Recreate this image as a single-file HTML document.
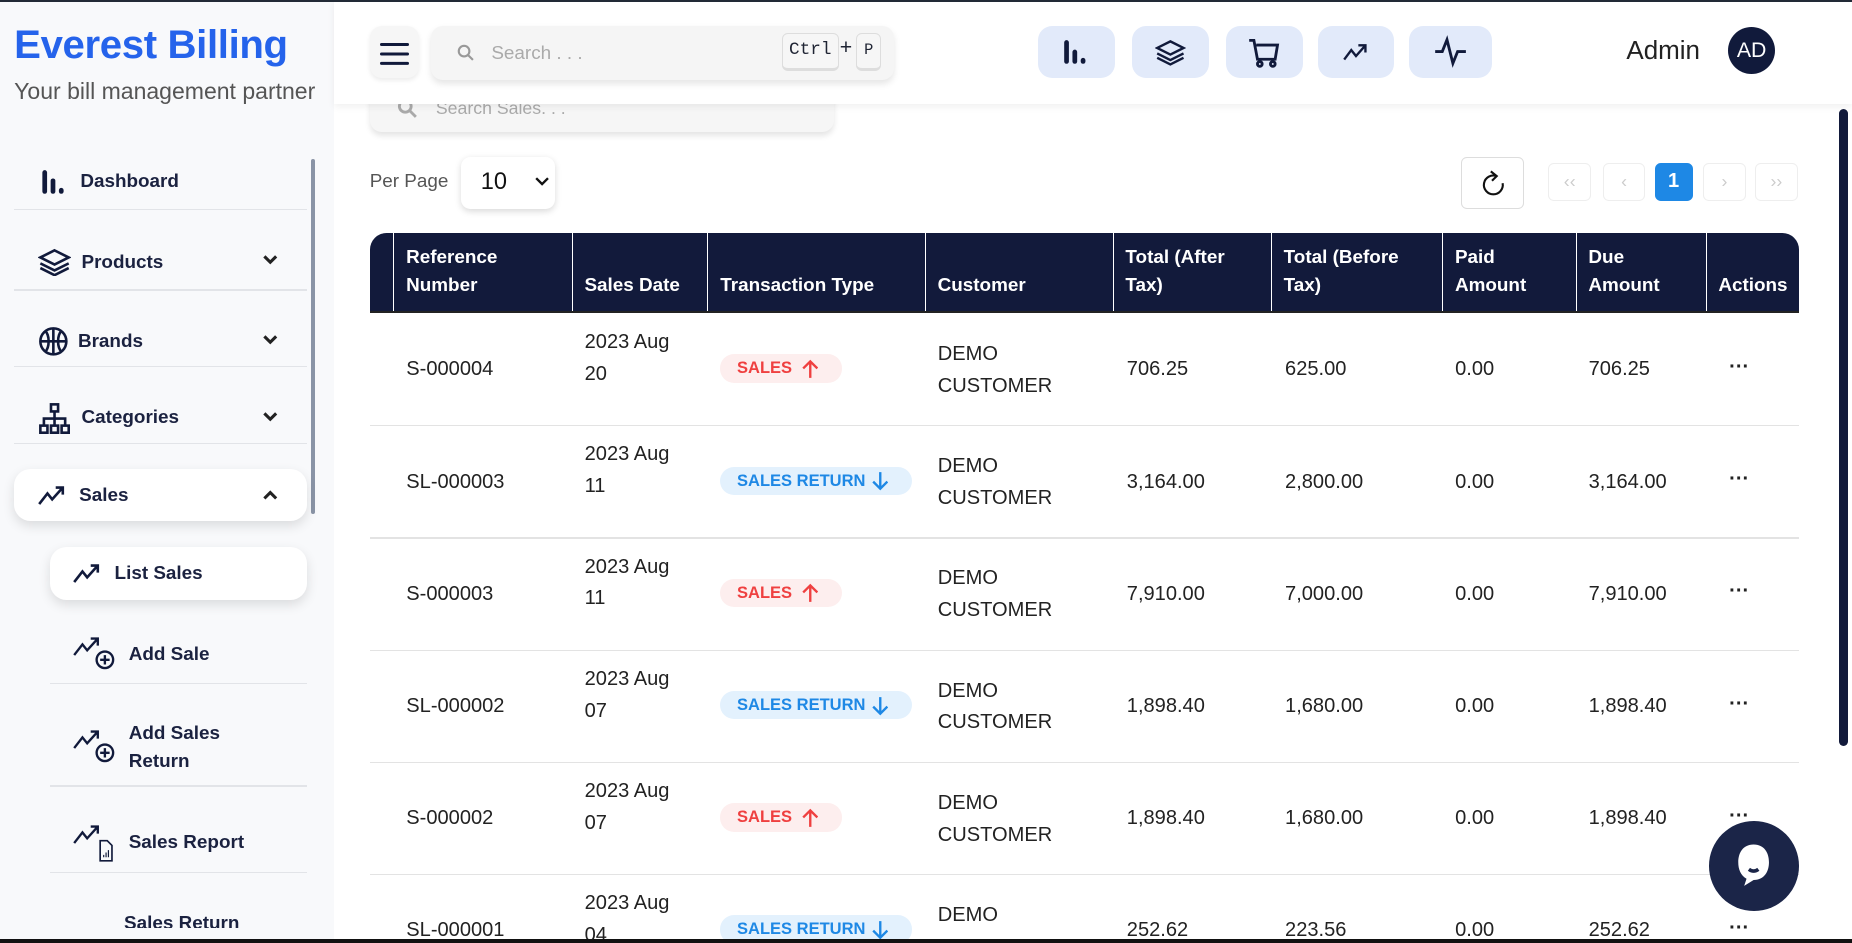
<!DOCTYPE html>
<html><head><meta charset="utf-8"><style>
*{box-sizing:border-box;margin:0;padding:0}
html,body{width:1852px;height:943px;overflow:hidden;background:#fff}
#r{zoom:1.18112;position:relative;width:1568px;height:798px;overflow:hidden;font-family:"Liberation Sans",sans-serif;color:#1f2433}
.a{position:absolute}
.side{left:0;top:0;width:283px;height:798px;background:#f8f9fb}
.brand{left:12px;top:19px;font-size:34px;font-weight:bold;color:#2563eb;letter-spacing:-0.3px}
.sub{left:12px;top:66px;font-size:19.5px;color:#555}
.item{left:12px;width:248px;font-size:16px;font-weight:bold;color:#1b2240;}
.sep{height:1px;background:#e2e4e8}
.ico{position:absolute}
.chev{position:absolute;right:24px}
.card{background:#fff;border-radius:14px;box-shadow:0 4px 10px rgba(0,0,0,.12)}
.hdr{left:283px;top:0;width:1285px;height:88px;background:#fff;box-shadow:0 3px 6px rgba(0,0,0,.06)}
.ib{top:22px;height:44px;background:#e2eafa;border-radius:12px}
.th{position:absolute;top:0;height:68px;color:#fff;font-weight:bold;font-size:16px;padding:10px 10px 0 10px;line-height:23px;border-left:1px solid #fff}
.td{position:absolute;font-size:17px;color:#222;line-height:27px}
.rowsep{position:absolute;left:313px;width:1210px;height:1px;background:#e3e3e3}
.b{position:absolute;height:24px;border-radius:12px;font-size:14px;font-weight:bold;line-height:24px;padding-left:14px}
.b svg{position:absolute;top:4px}
.bs{background:#fdeeee;color:#ef4040;width:103px}
.br{background:#e3f1fd;color:#1e88e5;width:162px}
.pg{position:absolute;top:138px;width:36px;height:32px;border:1px solid #eee;border-radius:5px;color:#ccc;text-align:center;line-height:30px;font-size:15px}
</style></head><body><div id="r">
<div class="a" style="left:0;top:0;width:1568px;height:2px;background:#222a36;z-index:9"></div>
<div class="a side"></div>
<div class="a brand">Everest Billing</div>
<div class="a sub">Your bill management partner</div>
<div class="a" style="left:263px;top:135px;width:4px;height:300px;background:#8a94a6;border-radius:2px"></div>

<svg width="0" height="0" style="position:absolute"><defs><symbol id="dn" viewBox="0 0 14 10"><path d="M2 2l5 5 5-5" fill="none" stroke="#222" stroke-width="2.6"/></symbol></defs></svg>

<div class="a item" style="top:143px;height:22px"><svg class="ico" style="left:22px;top:0" width="22" height="22" viewBox="0 0 22 22"><rect x="2" y="1" width="4" height="20" rx="2" fill="#111a3b"/><rect x="9" y="8" width="4" height="13" rx="2" fill="#111a3b"/><rect x="16" y="16" width="4" height="5" rx="2" fill="#111a3b"/></svg><span style="position:absolute;left:56px;top:2px">Dashboard</span></div>
<div class="a sep" style="left:12px;top:177px;width:248px"></div>
<div class="a item" style="top:210px;height:22px"><svg class="ico" style="left:20px;top:0" width="28" height="24" viewBox="0 0 28 24" fill="none" stroke="#111a3b" stroke-width="2.2"><path d="M14 2 L26 8 L14 14 L2 8 Z"/><path d="M2 13 L14 19 L26 13"/><path d="M2 17 L14 23 L26 17"/></svg><span style="position:absolute;left:57px;top:3px">Products</span><svg class="chev" style="top:5px" width="14" height="10"><use href="#dn"/></svg></div>
<div class="a sep" style="left:12px;top:245px;width:248px"></div>
<div class="a item" style="top:276px;height:24px"><svg class="ico" style="left:20px;top:0" width="26" height="26" viewBox="0 0 26 26" fill="none" stroke="#111a3b" stroke-width="2.2"><circle cx="13" cy="13" r="11"/><path d="M13 2v22M2 13h22M6 4c4 4 4 14 0 18M20 4c-4 4-4 14 0 18"/></svg><span style="position:absolute;left:54px;top:4px">Brands</span><svg class="chev" style="top:7px" width="14" height="10"><use href="#dn"/></svg></div>
<div class="a sep" style="left:12px;top:310px;width:248px"></div>
<div class="a item" style="top:340px;height:26px"><svg class="ico" style="left:20px;top:0" width="28" height="28" viewBox="0 0 28 28" fill="none" stroke="#111a3b" stroke-width="2.2"><rect x="11" y="2" width="6" height="6"/><rect x="2" y="20" width="6" height="6"/><rect x="11" y="20" width="6" height="6"/><rect x="20" y="20" width="6" height="6"/><path d="M14 8v12M5 20v-6h18v6"/></svg><span style="position:absolute;left:57px;top:5px">Categories</span><svg class="chev" style="top:8px" width="14" height="10"><use href="#dn"/></svg></div>
<div class="a sep" style="left:12px;top:375px;width:248px"></div>

<div class="a card" style="left:12px;top:397px;width:248px;height:44px"></div>
<div class="a item" style="top:408px;height:24px"><svg class="ico" style="left:20px;top:2px" width="24" height="20" viewBox="0 0 24 20" fill="none" stroke="#111a3b" stroke-width="2.2"><path d="M1 17 L8 8 L12 13 L21 3 M15 3h6v6"/></svg><span style="position:absolute;left:55px;top:3px">Sales</span><svg class="chev" style="top:6px;transform:rotate(180deg)" width="14" height="10"><use href="#dn"/></svg></div>

<div class="a card" style="left:42px;top:463px;width:218px;height:45px"></div>
<div class="a item" style="left:42px;width:218px;top:474px"><svg class="ico" style="left:20px;top:2px" width="24" height="20" viewBox="0 0 24 20" fill="none" stroke="#111a3b" stroke-width="2.2"><path d="M1 17 L8 8 L12 13 L21 3 M15 3h6v6"/></svg><span style="position:absolute;left:55px;top:3px">List Sales</span></div>

<div class="a item" style="left:42px;width:218px;top:538px"><svg class="ico" style="left:20px;top:0" width="40" height="32" viewBox="0 0 40 32" fill="none" stroke="#111a3b" stroke-width="2"><path d="M1 17 L8 8 L12 13 L21 3 M15 3h6v6"/><circle cx="27" cy="21" r="7"/><path d="M27 17v8M23 21h8"/></svg><span style="position:absolute;left:67px;top:7px">Add Sale</span></div>
<div class="a sep" style="left:42px;top:578px;width:218px"></div>
<div class="a item" style="left:42px;width:218px;top:610px;line-height:23px"><svg class="ico" style="left:20px;top:6px" width="40" height="32" viewBox="0 0 40 32" fill="none" stroke="#111a3b" stroke-width="2"><path d="M1 17 L8 8 L12 13 L21 3 M15 3h6v6"/><circle cx="27" cy="21" r="7"/><path d="M27 17v8M23 21h8"/></svg><span style="position:absolute;left:67px;top:0">Add Sales<br>Return</span></div>
<div class="a sep" style="left:42px;top:665px;width:218px"></div>
<div class="a item" style="left:42px;width:218px;top:697px"><svg class="ico" style="left:20px;top:0" width="40" height="34" viewBox="0 0 40 34" fill="none" stroke="#111a3b" stroke-width="2"><path d="M1 17 L8 8 L12 13 L21 3 M15 3h6v6"/><path d="M23 15h6l4 4v13h-10z" stroke-width="1.4"/><path d="M26 29v-2M28 29v-4M30 29v-6" stroke-width="1"/></svg><span style="position:absolute;left:67px;top:7px">Sales Report</span></div>
<div class="a sep" style="left:42px;top:738px;width:218px"></div>
<div class="a item" style="left:42px;width:218px;top:772px;height:14px;overflow:hidden"><span style="position:absolute;left:63px;top:1px">Sales Return</span></div>

<!-- main -->
<div class="a" style="left:313px;top:70px;width:393px;height:42px;background:#f6f6f6;border-radius:10px;box-shadow:0 3px 5px rgba(0,0,0,.1)"></div>
<svg class="a" style="left:336px;top:83px" width="18" height="18" viewBox="0 0 18 18" fill="none" stroke="#aaa" stroke-width="2.4"><circle cx="7" cy="7" r="5"/><path d="M11 11l5 5"/></svg>
<div class="a" style="left:369px;top:83px;font-size:15px;color:#aaa">Search Sales. . .</div>

<div class="a hdr"></div>
<div class="a" style="left:313px;top:22px;width:42px;height:44px;background:#f6f6f6;border-radius:10px;box-shadow:0 2px 4px rgba(0,0,0,.08)"></div>
<div class="a" style="left:322px;top:36px;width:24px;height:3px;background:#111a3b;border-radius:2px;box-shadow:0 8px 0 #111a3b,0 16px 0 #111a3b"></div>
<div class="a" style="left:365px;top:22px;width:392px;height:46px;background:#f5f5f5;border-radius:10px;box-shadow:0 3px 6px rgba(0,0,0,.1)"></div>
<svg class="a" style="left:387px;top:37px" width="15" height="15" viewBox="0 0 15 15" fill="none" stroke="#999" stroke-width="1.8"><circle cx="6" cy="6" r="4.5"/><path d="M9.5 9.5l4 4"/></svg>
<div class="a" style="left:416px;top:36px;font-size:16px;color:#aaa">Search . . .</div>
<div class="a" style="left:662px;top:28px;width:48px;height:32px;background:#f6f6f6;border:1px solid #ddd;border-bottom-width:3px;border-radius:5px;font-family:'Liberation Mono',monospace;font-size:15px;text-align:center;line-height:28px">Ctrl</div>
<div class="a" style="left:711px;top:30px;font-size:18px">+</div>
<div class="a" style="left:725px;top:28px;width:21px;height:32px;background:#f6f6f6;border:1px solid #ddd;border-bottom-width:3px;border-radius:5px;font-family:'Liberation Mono',monospace;font-size:13px;text-align:center;line-height:28px">P</div>

<div class="a ib" style="left:879px;width:65px"></div>
<svg class="a" style="left:900px;top:33px" width="22" height="22" viewBox="0 0 22 22"><rect x="1" y="1" width="4" height="20" rx="2" fill="#111a3b"/><rect x="8" y="9" width="4" height="12" rx="2" fill="#111a3b"/><rect x="15" y="16" width="4" height="5" rx="2" fill="#111a3b"/></svg>
<div class="a ib" style="left:958px;width:66px"></div>
<svg class="a" style="left:978px;top:31px" width="26" height="26" viewBox="0 0 28 24" fill="none" stroke="#111a3b" stroke-width="2.2"><path d="M14 2 L26 8 L14 14 L2 8 Z"/><path d="M2 13 L14 19 L26 13"/><path d="M2 17 L14 23 L26 17"/></svg>
<div class="a ib" style="left:1038px;width:65px"></div>
<svg class="a" style="left:1057px;top:32px" width="28" height="26" viewBox="0 0 28 26" fill="none" stroke="#111a3b" stroke-width="2.4"><path d="M1 2h4l3 16h15l2-12H7"/><circle cx="10" cy="22" r="2"/><circle cx="21" cy="22" r="2"/></svg>
<div class="a ib" style="left:1116px;width:64px"></div>
<svg class="a" style="left:1137px;top:36px" width="22" height="16" viewBox="0 0 22 16" fill="none" stroke="#111a3b" stroke-width="2"><path d="M1 14 L7 6 L11 11 L19 2 M13 2h6v6"/></svg>
<div class="a ib" style="left:1193px;width:70px"></div>
<svg class="a" style="left:1214px;top:30px" width="28" height="28" viewBox="0 0 28 28" fill="none" stroke="#111a3b" stroke-width="2.4"><path d="M1 14h6l4-10 5 20 4-10h7"/></svg>
<div class="a" style="left:1377px;top:30px;font-size:22px;color:#222">Admin</div>
<div class="a" style="left:1463px;top:23px;width:40px;height:40px;border-radius:50%;background:#111a3b;color:#fff;font-size:18px;text-align:center;line-height:40px">AD</div>

<div class="a" style="left:313px;top:145px;font-size:16px;color:#555">Per Page</div>
<div class="a" style="left:390px;top:133px;width:80px;height:44px;background:#fff;border-radius:8px;box-shadow:0 2px 6px rgba(0,0,0,.15)"></div>
<div class="a" style="left:407px;top:143px;font-size:20px;color:#111">10</div>
<svg class="a" style="left:453px;top:150px" width="12" height="8" viewBox="0 0 12 8" fill="none" stroke="#111" stroke-width="2"><path d="M1 1l5 5 5-5"/></svg>

<div class="a" style="left:1237px;top:133px;width:53px;height:44px;border:1px solid #ddd;border-radius:5px"></div>
<svg class="a" style="left:1252px;top:143px" width="24" height="26" viewBox="0 0 24 26" fill="none" stroke="#111" stroke-width="1.8"><path d="M15 6 A8 8 0 1 0 20 12"/><path d="M10 2l5 4-4 4"/></svg>
<div class="pg" style="left:1311px">&#8249;&#8249;</div>
<div class="pg" style="left:1357px">&#8249;</div>
<div class="pg" style="left:1401px;width:32px;background:#1e88e5;border-color:#1e88e5;color:#fff;font-weight:bold;font-size:17px">1</div>
<div class="pg" style="left:1442px">&#8250;</div>
<div class="pg" style="left:1486px">&#8250;&#8250;</div>

<div class="a" style="left:313px;top:197px;width:1210px;height:68px;background:#121a3b;border-radius:14px 14px 0 0">
<div class="th" style="left:20px;width:151px">Reference<br>Number</div>
<div class="th" style="left:171px;width:115px;padding-top:33px">Sales Date</div>
<div class="th" style="left:286px;width:184px;padding-top:33px">Transaction Type</div>
<div class="th" style="left:470px;width:159px;padding-top:33px">Customer</div>
<div class="th" style="left:629px;width:134px">Total (After<br>Tax)</div>
<div class="th" style="left:763px;width:145px">Total (Before<br>Tax)</div>
<div class="th" style="left:908px;width:113px">Paid<br>Amount</div>
<div class="th" style="left:1021px;width:110px">Due<br>Amount</div>
<div class="th" style="left:1131px;width:79px;padding-top:33px">Actions</div>
</div>
<div class="a" style="left:313px;top:263px;width:1210px;height:2px;background:#222"></div>

<div class="a" style="left:1557px;top:92px;width:8px;height:540px;background:#121a3b;border-radius:4px"></div>
<div id="rows"></div>
<script>
var d=[["S-000004","20","s","706.25","625.00","706.25"],["SL-000003","11","r","3,164.00","2,800.00","3,164.00"],["S-000003","11","s","7,910.00","7,000.00","7,910.00"],["SL-000002","07","r","1,898.40","1,680.00","1,898.40"],["S-000002","07","s","1,898.40","1,680.00","1,898.40"],["SL-000001","04","r","252.62","223.56","252.62"]];
var up='<svg width="14" height="17" viewBox="0 0 14 17" fill="none" stroke="#ef4040" stroke-width="2"><path d="M7 16V2M1 8l6-6 6 6"/></svg>';
var dn='<svg width="14" height="17" viewBox="0 0 14 17" fill="none" stroke="#1e88e5" stroke-width="2"><path d="M7 1v14M1 9l6 6 6-6"/></svg>';
var h="";
d.forEach(function(r,i){var t=265+i*95,c=t+47;
h+='<div class="td" style="left:344px;top:'+(c-12)+'px">'+r[0]+'</div>';
h+='<div class="td" style="left:495px;top:'+(c-35)+'px">2023 Aug<br>'+r[1]+'</div>';
if(r[2]=="s")h+='<div class="b bs" style="left:610px;top:'+(c-12)+'px">SALES <span style="position:absolute;left:69px;top:0">'+up+'</span></div>';
else h+='<div class="b br" style="left:610px;top:'+(c-12)+'px">SALES RETURN <span style="position:absolute;left:128px;top:0">'+dn+'</span></div>';
h+='<div class="td" style="left:794px;top:'+(c-25)+'px">DEMO<br>CUSTOMER</div>';
h+='<div class="td" style="left:954px;top:'+(c-12)+'px">'+r[3]+'</div>';
h+='<div class="td" style="left:1088px;top:'+(c-12)+'px">'+r[4]+'</div>';
h+='<div class="td" style="left:1232px;top:'+(c-12)+'px">0.00</div>';
h+='<div class="td" style="left:1345px;top:'+(c-12)+'px">'+r[5]+'</div>';
h+='<div class="td" style="left:1464px;top:'+(c-14)+'px;font-weight:bold">&middot;&middot;&middot;</div>';
if(i<5)h+='<div class="rowsep" style="top:'+(t+95)+'px"></div>';});
document.getElementById("rows").outerHTML=h;
</script>
<div class="a" style="left:1447px;top:695px;width:76px;height:76px;border-radius:50%;background:#1b2548"></div>
<svg class="a" style="left:1465px;top:712px" width="40" height="44" viewBox="0 0 40 44"><path d="M20 3c9 0 13 7 13 15s-4 15-13 15l-8 5 2-6c-5-3-7-8-7-14C7 10 11 3 20 3z" fill="#fff"/><path d="M16 24q4 3 8 0" stroke="#1b2548" stroke-width="3" fill="none"/></svg>
<div class="a" style="left:0;top:795px;width:1568px;height:3px;background:#111;z-index:9"></div>
</div></body></html>
